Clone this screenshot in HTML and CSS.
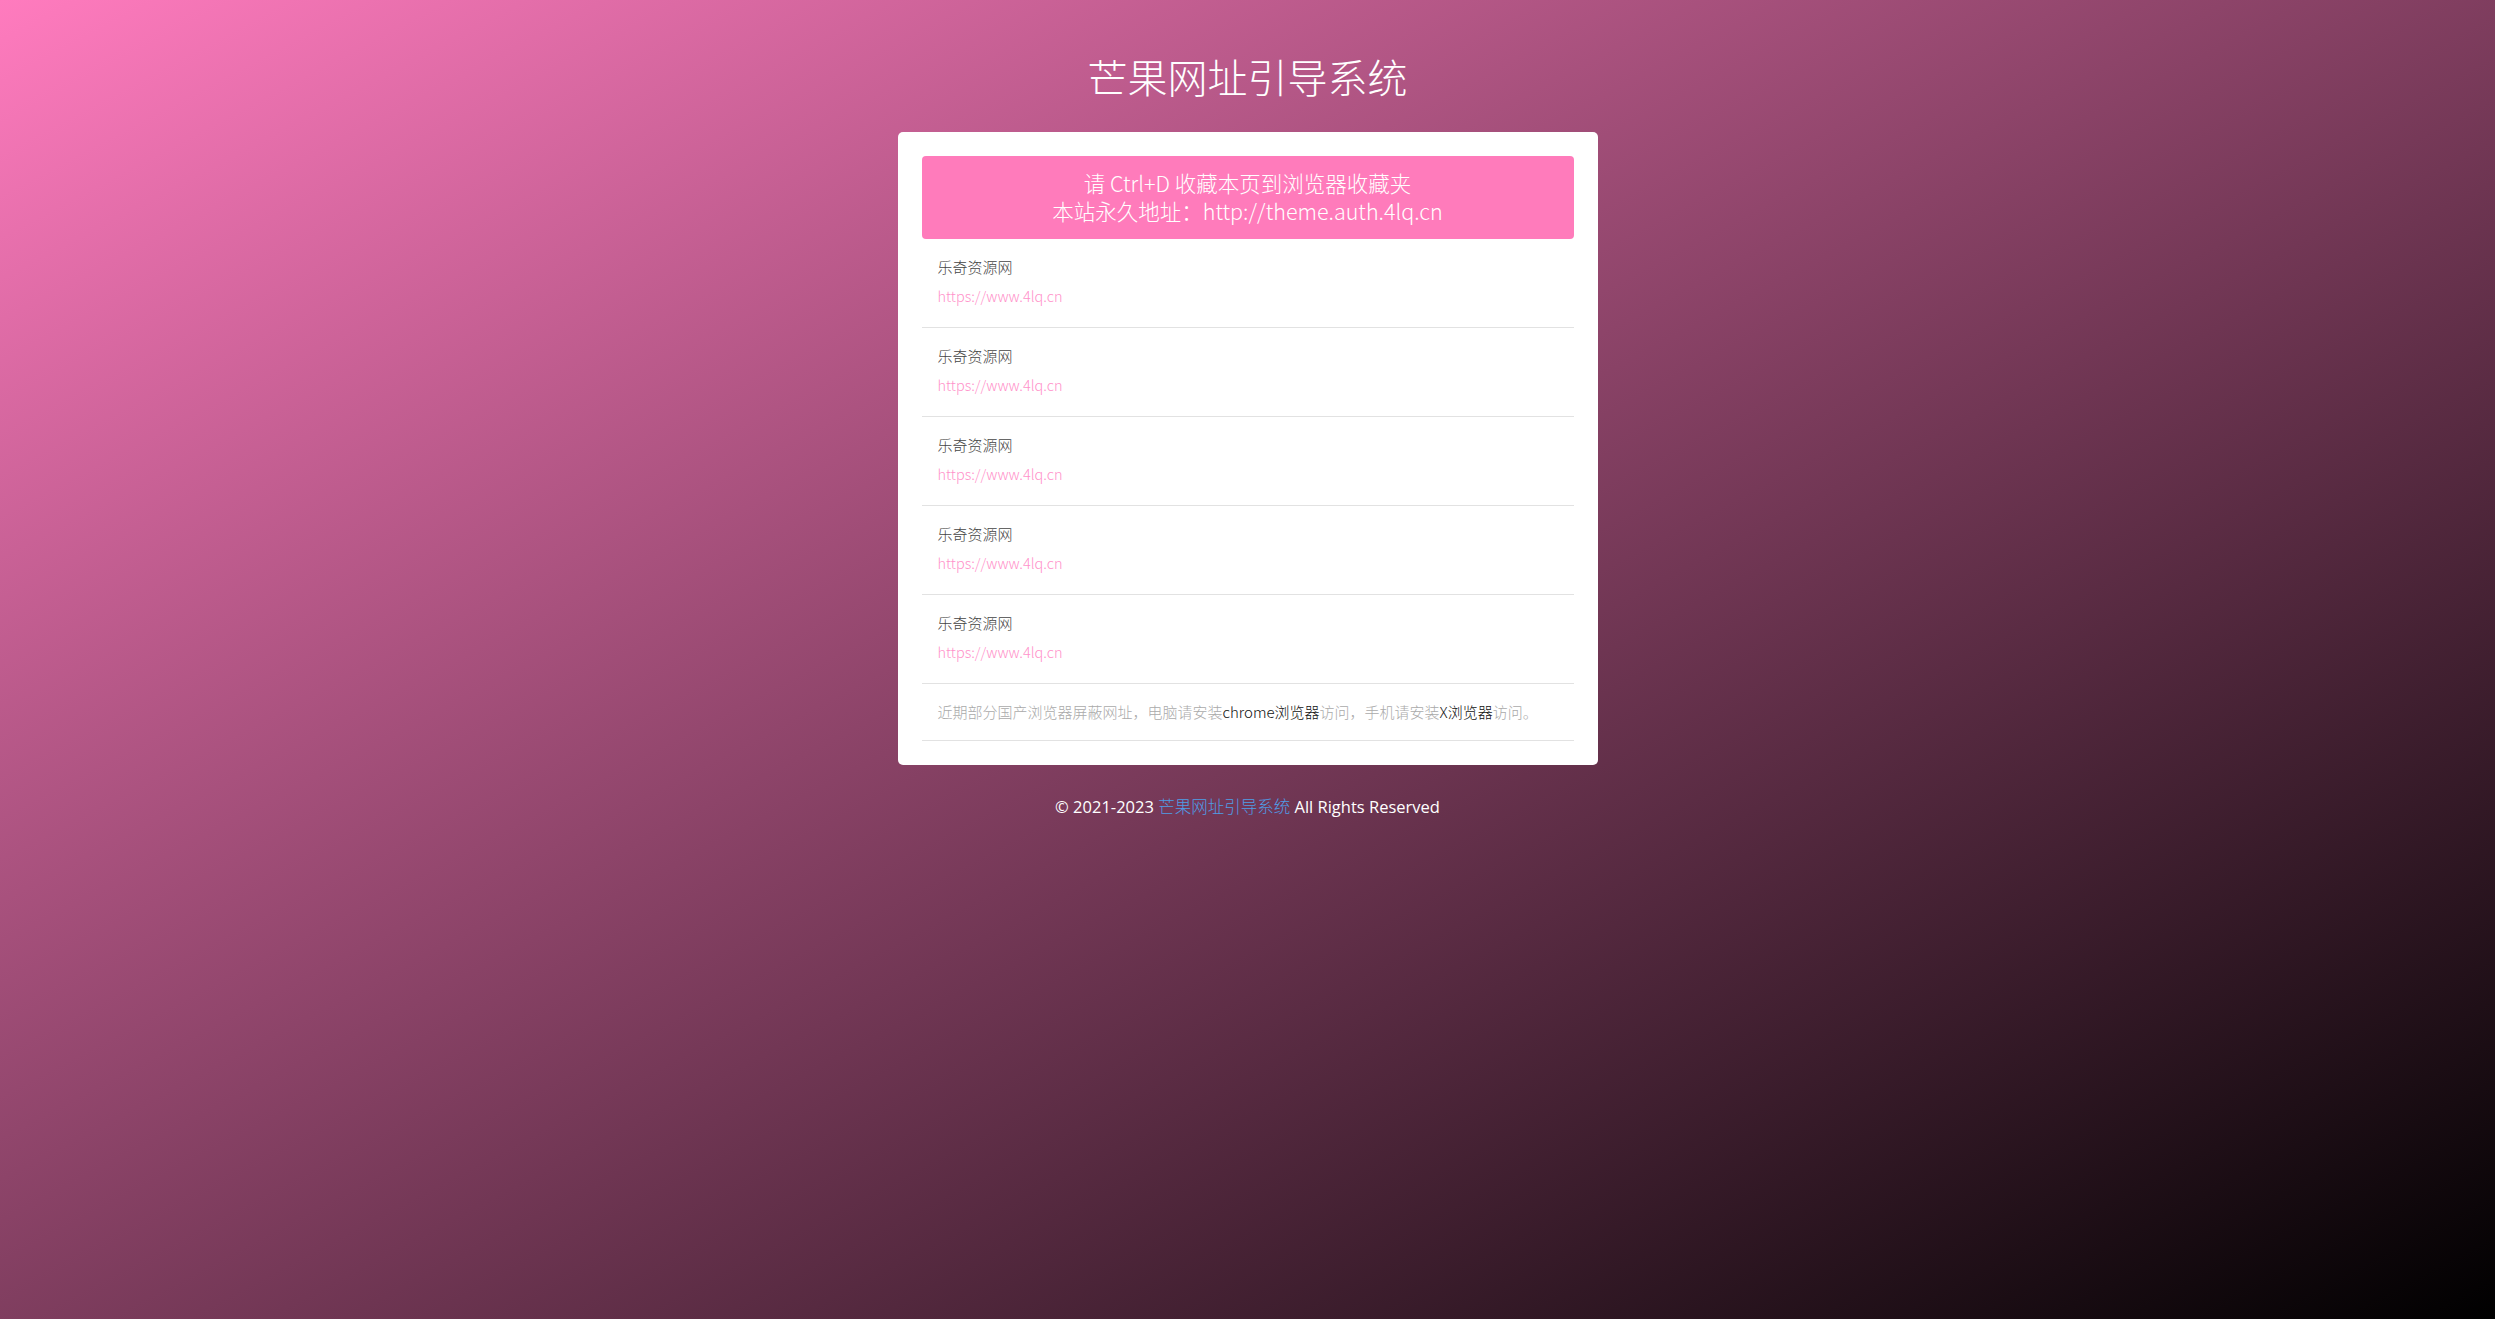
FILE: index.html
```html
<!DOCTYPE html>
<html lang="zh-CN">
<head>
<meta charset="utf-8">
<title>芒果网址引导系统</title>
<link rel="stylesheet" href="styles.css">
</head>
<body>
<div class="page">
  <h1 class="title">芒果网址引导系统</h1>
  <div class="card">
    <div class="banner">
      <div>请 Ctrl+D 收藏本页到浏览器收藏夹</div>
      <div>本站永久地址：http://theme.auth.4lq.cn</div>
    </div>
    <ul class="list">
      <li class="item"><div class="name">乐奇资源网</div><div class="url">https://www.4lq.cn</div></li>
      <li class="item"><div class="name">乐奇资源网</div><div class="url">https://www.4lq.cn</div></li>
      <li class="item"><div class="name">乐奇资源网</div><div class="url">https://www.4lq.cn</div></li>
      <li class="item"><div class="name">乐奇资源网</div><div class="url">https://www.4lq.cn</div></li>
      <li class="item"><div class="name">乐奇资源网</div><div class="url">https://www.4lq.cn</div></li>
      <li class="notice">近期部分国产浏览器屏蔽网址，电脑请安装<span class="hl">chrome浏览器</span>访问，手机请安装<span class="hl">X浏览器</span>访问。</li>
    </ul>
  </div>
  <div class="footer">© 2021-2023 <span class="flink">芒果网址引导系统</span> All Rights Reserved</div>
</div>
</body>
</html>
```
FILE: styles.css
```css
html, body {
  margin: 0;
  padding: 0;
  height: 100%;
}
body {
  background: linear-gradient(to bottom right, #ff7bbe 0%, #000000 100%);
  font-family: "Noto Sans CJK SC", "Noto Sans", sans-serif;
  color: #fff;
}
.page {
  display: flex;
  flex-direction: column;
  align-items: center;
}
.title {
  margin: 54px 0 34px;
  font-size: 40px;
  line-height: 44px;
  font-weight: 300;
  color: #fff;
}
.card {
  width: 700px;
  box-sizing: border-box;
  background: #fff;
  border-radius: 5px;
  padding: 24px;
}
.banner {
  background: #ff7bbb;
  border-radius: 4px;
  color: #fff;
  text-align: center;
  font-size: 21.5px;
  line-height: 28px;
  font-weight: 300;
  padding: 13px 0 14px;
}
.list {
  list-style: none;
  margin: 0;
  padding: 0;
}
.item {
  padding: 16px 16px 19px;
  border-bottom: 1px solid #e2e2e2;
}
.name {
  font-size: 15px;
  line-height: 24px;
  color: #444;
  font-weight: 300;
}
.url {
  margin-top: 5px;
  font-size: 14.5px;
  line-height: 24px;
  color: #ff92ca;
  font-weight: 300;
}
.notice {
  padding: 16px;
  font-size: 15px;
  line-height: 24px;
  color: #aaa;
  font-weight: 300;
  border-bottom: 1px solid #e2e2e2;
}
.hl {
  color: #111;
}
.footer {
  margin-top: 31px;
  font-size: 16.5px;
  line-height: 20px;
  color: #fff;
  font-family: "Open Sans", "Noto Sans CJK SC", sans-serif;
}
.flink {
  color: #4f9de6;
  font-family: "Noto Sans CJK SC", sans-serif;
  font-weight: 300;
}
```
